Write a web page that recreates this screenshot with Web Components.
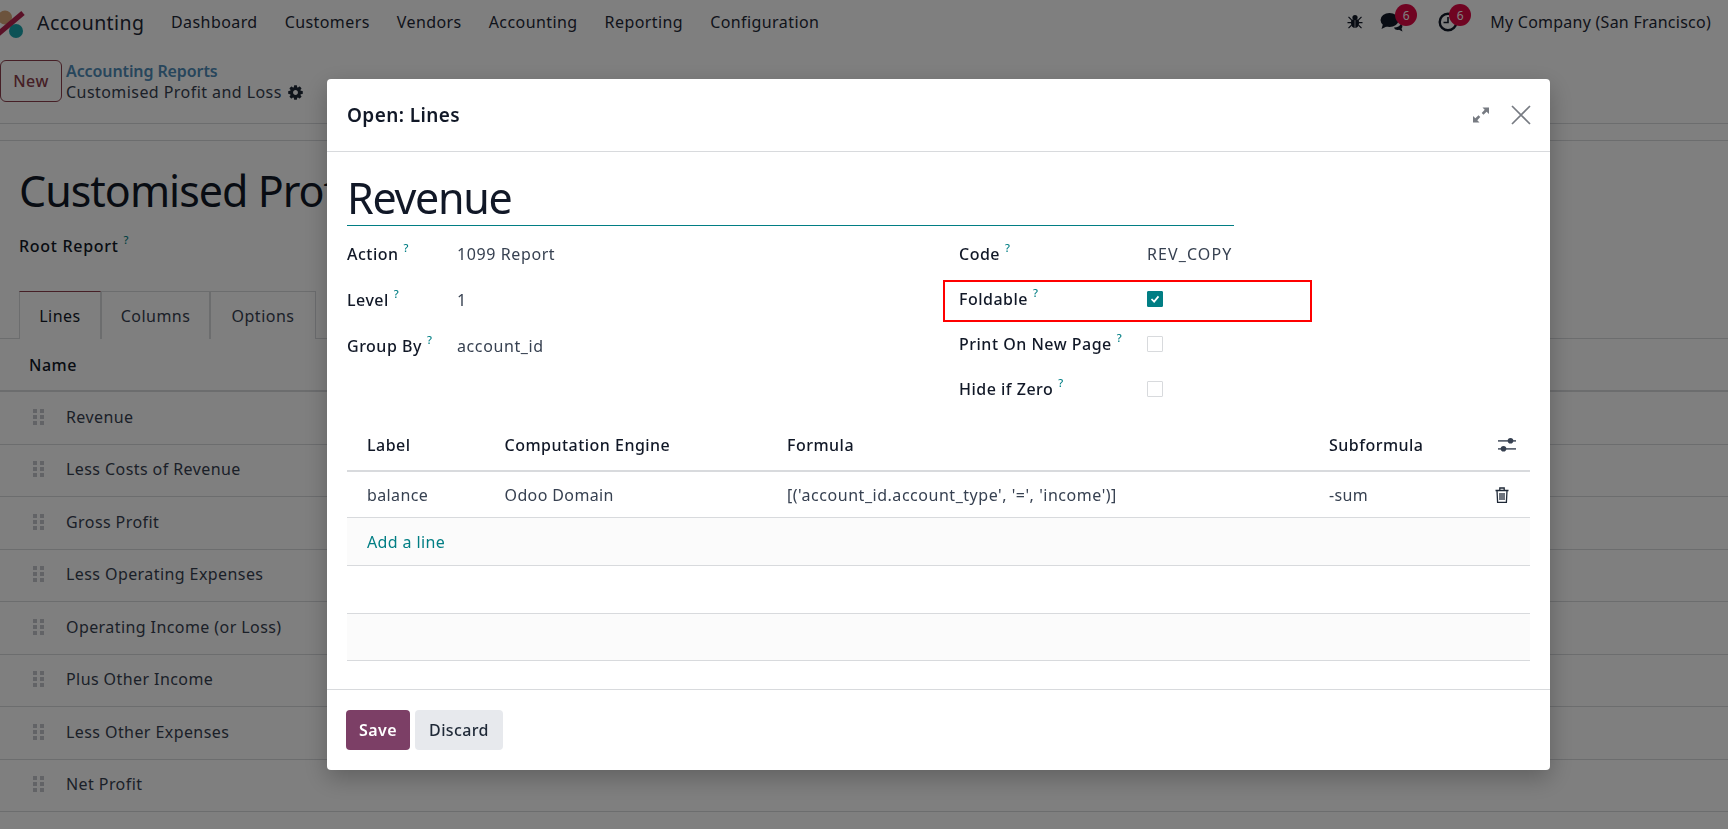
<!DOCTYPE html>
<html lang="en"><head><meta charset="utf-8"><title>Customised Profit and Loss</title>
<style>
html,body{margin:0;padding:0;height:100%;overflow:hidden;background:#fff}
body{font-family:"Noto Sans","Open Sans",sans-serif;font-size:16px;letter-spacing:.48px;color:#374151}
</style></head><body>
<o-app></o-app>
<script>
function el(name,html){customElements.define(name,class extends HTMLElement{constructor(){super();this.attachShadow({mode:'open'}).innerHTML=typeof html==='function'?html(this):html}})}
const I={
 cog:'<svg viewBox="0 0 1792 1792" width="17" height="17" fill="#1f2937"><path d="M1152 896q0-106-75-181t-181-75-181 75-75 181 75 181 181 75 181-75 75-181zm512-109v222q0 12-8 23t-20 13l-185 28q-19 54-39 91 35 50 107 138 10 12 10 25t-9 23q-27 37-99 108t-94 71q-12 0-26-9l-138-108q-44 23-91 38-16 136-29 186-7 28-36 28h-222q-14 0-24.5-8.5t-11.5-21.5l-28-184q-49-16-90-37l-141 107q-10 9-25 9-14 0-25-11-126-114-165-168-7-10-7-23 0-12 8-23 15-21 51-66.5t54-70.5q-27-50-41-99l-183-27q-13-2-21-12.5t-8-23.5v-222q0-12 8-23t19-13l186-28q14-46 39-92-40-57-107-138-10-12-10-24 0-10 9-23 26-36 98.5-107.5t94.5-71.5q13 0 26 10l138 107q44-23 91-38 16-136 29-186 7-28 36-28h222q14 0 24.5 8.5t11.5 21.5l28 184q49 16 90 37l142-107q9-9 24-9 13 0 25 10 129 119 165 170 7 8 7 22 0 12-8 23-15 21-51 66.5t-54 70.5q26 50 41 98l183 28q13 2 21 12.5t8 23.5z"/></svg>',
 bug:'<svg viewBox="0 0 16 16" width="16" height="16" fill="#111827"><circle cx="8" cy="3.600" r="2.600"/><path d="M4.200 5.400h3.500V14C5.400 13.800 4 12 4 9.500zM8.300 5.400h3.500L12 9.500c0 2.500-1.400 4.300-3.700 4.500z"/><path d="M1.500 2.800l3 3M14.500 2.800l-3 3M.5 8.600h4M15.500 8.600h-4M1.500 14.200l3-3M14.500 14.200l-3-3" stroke="#111827" stroke-width="1.200" fill="none"/></svg>',
 chat:'<svg viewBox="0 0 24 20" width="24" height="20" fill="#111827"><ellipse cx="9.500" cy="8" rx="9" ry="7"/><path d="M3 12l-1.500 5 6-3z"/><path d="M14 15.500c3.500 0 6-1.500 7-4 1.500 1.200 2 3.500.5 5l1 3-3.500-1.800c-1.800.5-4 .3-5-2.200z"/></svg>',
 clock:'<svg viewBox="0 0 20 20" width="20" height="20" fill="none" stroke="#111827"><circle cx="10" cy="10" r="8.300" stroke-width="2.400"/><path d="M10 5v5.500H5.500" stroke-width="1.600"/></svg>',
 expand:'<svg viewBox="0 0 16 16" width="16" height="16" fill="#777b82" style="left:-1px"><path d="M9.500 0.500H16V7l-2.400-2.300-3.100 3-1.800-1.800 3-3.100zM6.500 15.500H0V9l2.400 2.300 3.100-3 1.800 1.800-3 3.100z"/></svg>',
 close:'<svg viewBox="0 0 20 20" width="20" height="20" stroke="#777b82" stroke-width="1.700" fill="none"><path d="M1 1l18 18M19 1L1 19"/></svg>',
 sliders:'<svg viewBox="0 0 18 16" width="18" height="16" fill="#374151"><rect y="3.200" width="18" height="1.400"/><circle cx="12.500" cy="3.800" r="2.800"/><rect y="11.200" width="18" height="1.400"/><circle cx="5.500" cy="11.800" r="2.800"/></svg>',
 trash:'<svg viewBox="0 0 14 16" width="14" height="16" fill="none" stroke="#1f2937" stroke-width="1.300"><path d="M.5 3.500h13M4.800 3.300V1h4.400v2.300M2 3.500l.6 11.800h8.800L12 3.500M5 6v7M7 6v7M9 6v7"/></svg>',
 grip:'<svg viewBox="0 0 11 16" width="11" height="16" fill="#c4c7cc"><rect width="4" height="4"/><rect x="7" width="4" height="4"/><rect y="6" width="4" height="4"/><rect x="7" y="6" width="4" height="4"/><rect y="12" width="4" height="4"/><rect x="7" y="12" width="4" height="4"/></svg>',
 logo:'<svg viewBox="0 0 26 40" width="26" height="40"><circle cx="5" cy="15.500" r="7" fill="#d9a67a"/><circle cx="16" cy="29" r="7" fill="#1aa5ad"/><path d="M-2 32L23 11" stroke="#b5234f" stroke-width="5.200"/></svg>'
};
el('o-help','<style>:host{display:inline-block;color:#017e84;font-size:11px;font-weight:500;line-height:1;vertical-align:8px;margin-left:5px;letter-spacing:0}</style>?');
el('o-badge','<style>:host{position:absolute;top:-8px;left:var(--l,15px);width:22px;height:22px;border-radius:50%;background:#e00845;color:#fff;font-size:12px;letter-spacing:0;display:flex;align-items:center;justify-content:center}</style><slot></slot>');
el('o-nav-icon','<style>:host{position:relative;display:flex;align-items:center}</style><slot></slot>');
el('o-navbar',`<style>:host{display:flex;align-items:center;height:44px;color:#1f2937;flex:none;letter-spacing:.38px}
.logo{display:flex;width:37px;flex:none}.brand{font-size:19.500px;letter-spacing:.42px;color:#1f2937;width:134px;flex:none}
nav{display:flex;gap:27px;letter-spacing:.42px}.r{margin-left:auto;display:flex;align-items:center;padding-right:17px;letter-spacing:.25px}</style>
<span class="logo">${I.logo}</span><span class="brand">Accounting</span>
<nav><span>Dashboard</span><span>Customers</span><span>Vendors</span><span>Accounting</span><span>Reporting</span><span>Configuration</span></nav>
<div class="r"><o-nav-icon style="margin-right:17px">${I.bug}</o-nav-icon><o-nav-icon style="margin-right:34px">${I.chat}<o-badge>6</o-badge></o-nav-icon><o-nav-icon style="margin-right:32px;--l:11px">${I.clock}<o-badge>6</o-badge></o-nav-icon><span>My Company (San Francisco)</span></div>`);
el('o-panel',`<style>:host{display:flex;align-items:center;height:80px;border-bottom:1px solid #d8dadd;flex:none;gap:4px;box-sizing:border-box}
button{font:inherit;letter-spacing:inherit;font-weight:500;width:62px;height:42px;margin-top:-5px;background:#fff;border:1px solid #8c3f4c;border-radius:6px;color:#8c3f4c;padding:0}
.bc{display:flex;flex-direction:column;line-height:21px;margin-top:-3px}.l{color:#4f8cb8;font-weight:600;letter-spacing:-.1px}.c{display:flex;align-items:center;gap:5px;color:#374151;letter-spacing:.44px}</style>
<button>New</button><div class="bc"><span class="l">Accounting Reports</span><span class="c">Customised Profit and Loss ${I.cog}</span></div>`);
el('o-tab',`<style>:host{display:flex;align-items:center;justify-content:center;box-sizing:border-box;height:48px;border:1px solid #d8dadd;border-bottom:0;margin-bottom:-1px;background:#fff;color:#374151}:host([active]){border-top-color:#8c3f4c;color:#111827;position:relative}</style><slot></slot>`);
el('o-tabs',`<style>:host{display:flex;border-bottom:1px solid #d8dadd;padding-left:19px;margin-top:34px;height:47px}</style><slot></slot>`);
el('o-row',`<style>:host{display:flex;align-items:center;height:52.500px;box-sizing:border-box;border-bottom:1px solid #d8dadd;padding:0 0 2px 33px;gap:22px;color:#374151;letter-spacing:.42px}</style>${I.grip}<slot></slot>`);
el('o-sheet',`<style>:host{display:block;margin-top:16px;border-top:1px solid #d8dadd;flex:1}
h1{margin:0;padding:21px 0 0 19px;font-size:43px;letter-spacing:-1px;font-weight:400;line-height:58px;color:#111827;white-space:nowrap}
.root{padding:14px 0 0 19px;font-weight:500;color:#111827;line-height:22px;letter-spacing:.7px}
.th{height:53px;box-sizing:border-box;display:flex;align-items:center;padding-left:29px;font-weight:500;color:#111827;border-bottom:2px solid #d8dadd}</style>
<h1>Customised Profit and Loss</h1><div class="root">Root Report<o-help></o-help></div>
<o-tabs><o-tab active style="width:82px">Lines</o-tab><o-tab style="width:109px">Columns</o-tab><o-tab style="width:106px">Options</o-tab></o-tabs>
<div class="th">Name</div><slot></slot>`);
el('o-field',`<style>:host{display:flex;align-items:center;height:30px;margin-bottom:16px}
.l{font-weight:500;color:#111827;flex:none;white-space:nowrap;position:relative;top:-1px;letter-spacing:.5px}.v{color:#374151;letter-spacing:.6px}</style><span class="l" part="l"><slot name="l"></slot><o-help></o-help></span><span class="v"><slot></slot></span>`);
el('o-check',`<style>:host{display:block;width:16px;height:16px;box-sizing:border-box;border:1px solid #d8dadd;border-radius:1px;background:#fff}:host([on]){background:#017e84;border-color:#017e84}</style><slot></slot>`);
el('o-lines',`<style>:host{display:block;margin-top:0}.r{display:grid;grid-template-columns:137.500px 282.500px 542px 171px 50px;align-items:center;box-sizing:border-box;border-bottom:1px solid #d8dadd}
.r>*{padding-left:20px}.h{height:53px;font-weight:500;color:#111827;border-bottom-width:2px}.b{height:46px;color:#374151;letter-spacing:.38px}.alt{background:#fbfbfb}.e{height:46.500px;border-bottom:1px solid #d8dadd}.a{height:47px;display:flex;align-items:center;padding-left:20px;color:#017e84;border-bottom:1px solid #d8dadd;letter-spacing:.38px}.i{padding:0;display:flex}.f{letter-spacing:.53px}</style>
<div class="r h"><span>Label</span><span>Computation Engine</span><span>Formula</span><span>Subformula</span><span class="i" style="padding-left:18px">${I.sliders}</span></div>
<div class="r b"><span>balance</span><span>Odoo Domain</span><span class="f">[('account_id.account_type', '=', 'income')]</span><span>-sum</span><span class="i" style="padding-left:15px">${I.trash}</span></div>
<div class="a alt">Add a line</div><div class="e"></div><div class="e alt"></div>`);
el('o-dialog',`<style>:host{position:fixed;left:327px;top:79px;width:1223px;height:691px;background:#fff;border-radius:4px;box-shadow:0 8px 24px rgba(0,0,0,.25);display:flex;flex-direction:column;color:#374151}
header{height:72px;flex:none;display:flex;align-items:center;padding:0 19px 0 20px;border-bottom:1px solid #d8dadd;gap:21px}
header b{font-weight:600;font-size:19px;letter-spacing:.4px;color:#111827;flex:1}
header svg{position:relative}
main{flex:1;padding:14px 20px 0}
.t{font-size:43px;letter-spacing:-1.300px;line-height:56px;padding-top:4px;color:#111827;width:887px;border-bottom:1px solid #017e84;height:60px;box-sizing:border-box;margin-bottom:13px}
.g{display:flex}.c1{width:612px}.c2{position:relative}.c1 o-field::part(l){width:110px}.c2 o-field::part(l){width:188px}
.red{position:absolute;left:-16px;top:41px;width:369px;height:42px;box-sizing:border-box;border:2px solid #f00}
.c2 o-field{margin-bottom:15px}
footer{flex:none;height:81px;box-sizing:border-box;border-top:1px solid #d8dadd;display:flex;align-items:center;padding:0 0 0 19px;gap:5px}
button{font:inherit;letter-spacing:.38px;font-weight:500;height:40px;border:0;border-radius:4px;padding:0}
.s{background:#7c3f66;color:#fff;width:64px;font-weight:600}.d{background:#e7e9ed;color:#1f2937;width:88px}</style>
<header><b>Open: Lines</b>${I.expand}${I.close}</header>
<main><div class="t">Revenue</div>
<div class="g"><div class="c1"><o-field><span slot="l">Action</span>1099 Report</o-field><o-field><span slot="l">Level</span>1</o-field><o-field><span slot="l">Group By</span>account_id</o-field></div>
<div class="c2"><o-field><span slot="l">Code</span><span style="letter-spacing:1.100px">REV_COPY</span></o-field><o-field><span slot="l">Foldable</span><o-check on><svg viewBox="0 0 16 16" width="14" height="14" fill="none" stroke="#fff" stroke-width="2" style="display:block"><path d="M4 8l3 3 5-6"/></svg></o-check></o-field><o-field><span slot="l">Print On New Page</span><o-check></o-check></o-field><o-field><span slot="l">Hide if Zero</span><o-check></o-check></o-field><div class="red"></div></div></div>
<o-lines></o-lines></main>
<footer><button class="s">Save</button><button class="d">Discard</button></footer>`);
el('o-backdrop','<style>:host{position:fixed;inset:0;background:rgba(0,0,0,.5)}</style>');
el('o-app',`<style>:host{display:flex;flex-direction:column;height:829px;overflow:hidden}</style>
<o-navbar></o-navbar><o-panel></o-panel>
<o-sheet><o-row>Revenue</o-row><o-row>Less Costs of Revenue</o-row><o-row>Gross Profit</o-row><o-row>Less Operating Expenses</o-row><o-row>Operating Income (or Loss)</o-row><o-row>Plus Other Income</o-row><o-row>Less Other Expenses</o-row><o-row>Net Profit</o-row></o-sheet>
<o-backdrop></o-backdrop><o-dialog></o-dialog>`);
</script>
</body></html>
